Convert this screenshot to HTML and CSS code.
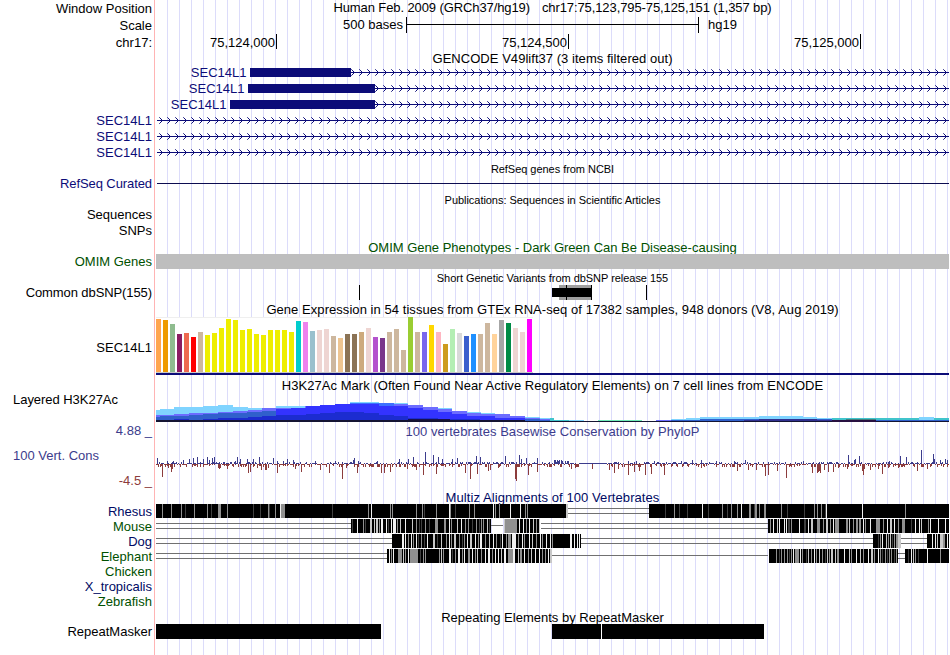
FILE: index.html
```html
<!DOCTYPE html>
<html lang="en">
<head>
<meta charset="utf-8">
<title>Genome Browser chr17:75,123,795-75,125,151</title>
<link rel="stylesheet" href="styles.css">
</head>
<body>
<svg class="defs" width="0" height="0" aria-hidden="true">
  <defs>
    <pattern id="arrows" x="0" y="0" width="8" height="16" patternUnits="userSpaceOnUse">
      <path d="M0 8.5H8" stroke="#0c0c78"/>
      <path d="M0.3 5.3L3.5 8.5L0.3 11.7" fill="none" stroke="#0c0c78"/>
    </pattern>
    <pattern id="arrows-intron" href="#arrows" x="2"/>
  </defs>
</svg>
<main class="browser">
  <div class="row h17"><div class="label">Window Position</div><div class="track title position"><span>Human Feb. 2009 (GRCh37/hg19)</span><span>chr17:75,123,795-75,125,151 (1,357 bp)</span></div></div>
  <div class="row h17"><div class="label">Scale</div><div class="track scale"><span class="bases">500 bases</span><span class="ruler"></span><span class="hg">hg19</span></div></div>
  <div class="row h17"><div class="label">chr17:</div><div class="track ticks"><span>75,124,000</span><span>75,124,500</span><span>75,125,000</span></div></div>
  <div class="row h13"><div class="track title t-gencode"><span>GENCODE V49lift37 (3 items filtered out)</span></div></div>

  <div class="row h16 navy gene-row"><div class="track gene g1"><span>SEC14L1</span><i></i><svg height="16"><rect width="100%" height="16" fill="url(#arrows)"/></svg></div></div>
  <div class="row h16 navy gene-row"><div class="track gene g2"><span>SEC14L1</span><i></i><svg height="16"><rect width="100%" height="16" fill="url(#arrows)"/></svg></div></div>
  <div class="row h16 navy gene-row"><div class="track gene g3"><span>SEC14L1</span><i></i><svg height="16"><rect width="100%" height="16" fill="url(#arrows)"/></svg></div></div>
  <div class="row h16 navy gene-row"><div class="label">SEC14L1</div><div class="track intron"><svg height="16"><rect width="100%" height="16" fill="url(#arrows-intron)"/></svg></div></div>
  <div class="row h16 navy gene-row"><div class="label">SEC14L1</div><div class="track intron"><svg height="16"><rect width="100%" height="16" fill="url(#arrows-intron)"/></svg></div></div>
  <div class="row h16 navy gene-row"><div class="label">SEC14L1</div><div class="track intron"><svg height="16"><rect width="100%" height="16" fill="url(#arrows-intron)"/></svg></div></div>

  <div class="row h16"><div class="track title small"><span>RefSeq genes from NCBI</span></div></div>
  <div class="row h15 navy"><div class="label tight">RefSeq Curated</div><div class="track refline"></div></div>
  <div class="row h16"><div class="track title small"><span>Publications: Sequences in Scientific Articles</span></div></div>
  <div class="row h16"><div class="label">Sequences</div></div>
  <div class="row h16"><div class="label">SNPs</div></div>
  <div class="row h15 green"><div class="track title t-omim"><span>OMIM Gene Phenotypes - Dark Green Can Be Disease-causing</span></div></div>
  <div class="row h15 green"><div class="label">OMIM Genes</div><div class="track omim"></div></div>
  <div class="row h16"><div class="track title small"><span>Short Genetic Variants from dbSNP release 155</span></div></div>
  <div class="row h15"><div class="label tight">Common dbSNP(155)</div><div class="track"><svg width="793" height="15" shape-rendering="crispEdges"><path d="M203.5 0V15M490.5 0V15" stroke="#000"/><path fill="#a0a0a0" d="M403 0h32v15h-32z"/><path d="M396 3h39v9h-39zM410 0h1v15h-1zM435 0h1v15h-1z"/></svg></div></div>
  <div class="row h17"><div class="track title t-gtex"><span>Gene Expression in 54 tissues from GTEx RNA-seq of 17382 samples, 948 donors (V8, Aug 2019)</span></div></div>
  <div class="row gtex-row"><div class="label">SEC14L1</div><div class="track gtex"><svg id="gtex" width="377" height="56" shape-rendering="crispEdges"></svg></div></div>
  <div class="row h20"><div class="track title t-h3k"><span>H3K27Ac Mark (Often Found Near Active Regulatory Elements) on 7 cell lines from ENCODE</span></div></div>
  <div class="row h27"><div class="label left">Layered H3K27Ac</div><div class="track"><svg id="h3k" width="793" height="27" shape-rendering="crispEdges"></svg></div></div>
  <div class="row h20 cons"><div class="label limit">4.88 _</div><div class="track title t-phylop"><span>100 vertebrates Basewise Conservation by PhyloP</span></div></div>
  <div class="row cons-row"><div class="cons-labels"><div class="cons">100 Vert. Cons</div><div class="neg">-4.5 _</div></div><div class="track"><svg id="phylop" width="793" height="48" shape-rendering="crispEdges"></svg></div></div>
  <div class="row h14 multiz"><div class="track title t-multiz"><span>Multiz Alignments of 100 Vertebrates</span></div></div>
  <div class="row h15 multiz"><div class="label">Rhesus</div><div class="track"><svg id="rhesus" width="793" height="14" shape-rendering="crispEdges"></svg></div></div>
  <div class="row h15 green"><div class="label">Mouse</div><div class="track"><svg id="mouse" width="793" height="14" shape-rendering="crispEdges"></svg></div></div>
  <div class="row h15 multiz"><div class="label">Dog</div><div class="track"><svg id="dog" width="793" height="14" shape-rendering="crispEdges"></svg></div></div>
  <div class="row h15 green"><div class="label">Elephant</div><div class="track"><svg id="elephant" width="793" height="14" shape-rendering="crispEdges"></svg></div></div>
  <div class="row h15 green"><div class="label">Chicken</div></div>
  <div class="row h15 multiz"><div class="label">X_tropicalis</div></div>
  <div class="row h15 green"><div class="label">Zebrafish</div></div>
  <div class="row h15"><div class="track title t-rmsk"><span>Repeating Elements by RepeatMasker</span></div></div>
  <div class="row h15"><div class="label">RepeatMasker</div><div class="track rmsk"><i></i><i></i><i></i></div></div>
</main>
<script src="tracks.js"></script>
</body>
</html>
```
FILE: styles.css
```css
* { box-sizing: border-box; }
body { margin: 0; background: #fff; color: #000; font: 13px "Liberation Sans", Arial, sans-serif; }
.defs { display: block; position: absolute; }
.browser {
  width: 950px; height: 655px; overflow: hidden; padding-right: 1px;
  background:
    linear-gradient(#ffb4b4, #ffb4b4) 154px 0 / 1px 100% no-repeat,
    repeating-linear-gradient(90deg, #dcdcfa 0 1px, transparent 1px 12px) 167px 0 / 782px 100% no-repeat;
}
.row { display: grid; grid-template: 100% / 152px 793px; column-gap: 4px; white-space: pre; }
.label { grid-column: 1; text-align: right; }
.tight { letter-spacing: -.09px; }
.track { grid-column: 2; min-width: 0; height: 100%; display: flex; }
.track svg { display: block; flex: none; }
.title { justify-content: center; }
.h13 { height: 13px; line-height: 15px; }
.h14 { height: 14px; line-height: 14px; }
.h15 { height: 15px; line-height: 15px; }
.h16 { height: 16px; line-height: 16px; }
.h17 { height: 17px; line-height: 17px; }
.h20 { height: 20px; line-height: 20px; }
.h27 { height: 27px; line-height: 9px; }
.gene-row { line-height: 17px; }
.navy { color: #0c0c78; }
.green { color: #005000; }
.cons { color: #3c3c8c; }
.neg { color: #8c3c3c; }
.multiz { color: #000a64; }
.small { font-size: 11px; padding-top: 1px; letter-spacing: -.04px; }
.position { line-height: 15px; gap: 12px; letter-spacing: -.1px; }
.t-gencode { letter-spacing: .04px; }
.t-omim, .t-rmsk { line-height: 17px; }
.t-gtex { line-height: 19px; letter-spacing: .055px; }
.t-h3k { line-height: 21px; letter-spacing: .045px; }
.t-phylop { letter-spacing: .04px; }
.t-multiz { line-height: 16px; letter-spacing: .08px; }

.scale { align-items: flex-start; line-height: 15px; }
.bases { width: 247px; text-align: right; }
.ruler { width: 293px; height: 16px; margin-left: 3px; border: solid #000; border-width: 0 1px; background: linear-gradient(#000, #000) 0 7px / 100% 1px no-repeat; }
.hg { margin-left: 9px; }
.ticks span { width: 292px; text-align: right; padding-right: 1px; border-right: 1px solid #000; height: 15px; line-height: 18px; }
.ticks span:first-child { width: 121px; }

.gene i { height: 9px; margin-top: 4px; background: #0c0c78; }
.gene span { text-align: right; padding-right: 3.5px; }
.gene svg { flex: 1; min-width: 0; }
.g1 span { width: 94px; }
.g1 i { width: 101px; }
.g2 span { width: 92px; }
.g2 i { width: 127px; }
.g3 span { width: 74px; }
.g3 i { width: 145px; }
.intron { padding-left: 1px; }
.intron svg { width: 792px; }
.refline { background: linear-gradient(#0c0c50, #0c0c50) 1px 7px / 792px 1px no-repeat; }
.omim { background: #bebebe; }

.gtex-row { height: 58px; line-height: 62px; }
.gtex { border-bottom: 2px solid #0c0c78; }
.left { text-align: left; padding-left: 13px; letter-spacing: -.04px; }
.limit { line-height: 18px; }
.cons-row { height: 48px; }
.cons-labels { display: flex; flex-direction: column; gap: 10px; padding-top: 6px; line-height: 15px; }
.cons-labels .cons { padding-left: 13px; }
.cons-labels .neg { text-align: right; }
.rmsk i { background: #000; width: 225px; }
.rmsk i:nth-child(2) { width: 49px; margin-left: 171px; }
.rmsk i:nth-child(3) { width: 162px; margin-left: 1px; }
```
FILE: tracks.js
```js
// All x values are window pixels; the data area starts at ORIGIN.
const ORIGIN = 156;

function rects(id, list) {
  document.getElementById(id).innerHTML = list
    .map(([x, y, w, h, fill]) => `<rect x="${x}" y="${y}" width="${w}" height="${h}" fill="${fill}"/>`)
    .join("");
}

// GTEx: one bar per tissue, [height, colour]
const Y = "#eeee00", T = "#cdb79e", P = "#eed5d2";
const gtex = [
  [53, "#ffa54f"], [52, "#ee9a00"], [48, "#8fbc8f"], [38, "#8b1c62"], [39, "#ee6a50"], [35, "#ff0000"], [40, T],
  [37, Y], [39, Y], [44, Y], [53, Y], [52, Y], [42, Y], [43, Y], [38, Y], [37, Y], [42, Y], [42, Y], [42, Y], [40, Y],
  [51, "#00cdcd"], [50, "#ee82ee"], [41, "#9ac0cd"], [42, P], [43, P], [36, T], [34, "#eec591"],
  [38, "#8b7355"], [38, "#8b7355"], [40, "#cdaa7d"], [44, P], [35, "#b452cd"], [34, "#7a378b"], [40, T], [43, T],
  [22, T], [55, "#9acd32"], [40, T], [40, "#7a67ee"], [47, "#ffd700"], [40, "#ffb6c1"], [28, "#cd9b1d"],
  [43, "#b4eeb4"], [39, "#d9d9d9"], [36, "#3a5fcd"], [38, "#1e90ff"], [38, T], [49, T], [38, "#ffd39b"],
  [52, "#a6a6a6"], [49, "#008b45"], [44, P], [40, P], [53, "#ff00ff"]
];
rects("gtex", [
  [0, 0, 377, 56, "#fff"], [0, 0, 377, 1, "#efefef"], [0, 55, 377, 1, "#c8c8c8"],
  ...gtex.map(([h, c], i) => [i * 7, 55 - h, 5, h, c])
]);

// H3K27Ac: stacked step areas, "x:top" up to the listed end, painted back to front
const BASE = 422, TOP = 395;
const layers = [
  ["#80d4ff", "156:410 160:409 174:407 203:406 218:405 233:407 248:408 276:406 320:405 335:404 350:402 379:403 408:405 423:407 438:408 452:411 467:412 481:413 495:414 510:416 525:417 540:418 554"],
  ["#6c6cff", "156:415 174:414 189:413 218:412 233:411 248:410 262:408 291:408 305:406 350:404 408:405 423:407 438:409 452:411 467:413 481:414 510:416 525:418 540:419 550"],
  ["#3060cc", "156:417 160:416 189:415 203:414 218:413 247:412 262:411 276"],
  ["#3333ff", "276:409 291:408 306:406 320:405 335:404 350:403 379:406 408:408 423:410 438:412 452:414 467:416 495:418 525:420 554"],
  ["#3c70ff", "350:403 379:403 394"],
  ["#3333ff", "350:404 379:406 394"],
  ["#1c2cd0", "156:420 174:419 189:420 203:419 218:418 248:417 262:416 276:415 306:414 320:413 335:412 364:413 379:415 394:416 408:418 438:419 480:420 554"],
  ["#3060cc", "525:419 540:420 554"],
  ["#40c4cc", "550:418 554:420 569"],
  ["#80d4ff", "569:420 584"],
  ["#70ecb8", "598:420 642"],
  ["#6c6cff", "656:420 671"],
  ["#80d4ff", "671:419 686:418 700:417 759:416 803:417 817:418 832"],
  ["#40c4cc", "832:418 949"],
  ["#80d4ff", "919:417 934:418 934"],
  ["#3060cc", "671:420 700:419 832:420 949"],
  ["#303090", "744:420 759:419 817:420 876"],
  ["#408080", "846:419 876"],
  ["#181050", "408:419 450:420 495:421 949"],
  ["#141432", "156:420 525:421 949"],
  ["#281040", "832:420 876"]
];
const steps = [];
for (const [fill, spec] of layers) {
  const pts = spec.split(" ").map(p => p.split(":").map(Number));
  for (let i = 0; i + 1 < pts.length; i++) {
    const [x, y] = pts[i];
    steps.push([x - ORIGIN, y - TOP, pts[i + 1][0] - x, BASE - y, fill]);
  }
}
rects("h3k", steps);

// PhyloP: signed peaks "x:height" over a low, mixed background
const up = "157:6 167:3 173:3 183:4 189:5 193:6 197:7 203:5 207:7 209:4 212:6 214:7 223:2 230:2 235:3 237:7 240:5 247:5 253:5 259:7 273:6 277:3 283:3 287:5 293:4 315:3 335:3 353:4 354:6 358:3 377:3 399:5 408:5 413:7 425:12 433:9 438:7 442:5 452:5 457:6 476:8 480:7 505:8 519:9 521:5 526:6 537:6 554:4 555:4 557:4 558:3 559:4 561:4 562:3 565:3 567:3 568:3 628:3 636:3 646:2 654:3 681:3 692:4 701:4 716:3 734:3 745:4 763:2 803:3 848:9 854:4 855:5 859:8 889:3 900:8 906:7 921:14 933:10 934:5 940:4 945:5 947:4";
const down = "160:3 162:13 168:4 171:8 172:5 174:3 200:3 209:2 218:4 219:5 220:4 224:2 227:5 232:2 243:3 248:9 250:8 254:2 257:4 261:6 265:6 266:6 268:4 277:9 283:2 293:3 295:5 301:8 320:6 329:9 342:15 346:4 357:9 381:9 384:9 390:8 407:5 416:6 423:11 436:10 465:9 470:15 477:10 488:7 490:6 498:4 515:15 516:17 528:11 537:8 549:3 571:5 575:4 592:5 609:6 614:9 618:5 628:11 634:8 639:7 645:11 651:10 664:11 701:4 737:7 748:6 756:6 765:12 768:11 777:7 786:14 812:9 817:9 818:8 819:7 820:9 824:6 828:8 833:8 838:4 847:5 862:7 863:11 864:5 870:6 878:5 882:10 888:4 898:4 917:7 927:5";
const peaks = s => new Map(s.split(" ").map(p => p.split(":").map(Number)));
const ups = peaks(up), downs = peaks(down);
const bars = [];
for (let x = 156; x < 949; x++) {
  const n = (x * 7919 + (x * x) % 97) % 11;
  const quiet = x > 578 && x < 606;
  const u = ups.get(x) || (quiet ? 1 : n < 2 ? 2 : n < 6 ? 1 : 0);
  const d = downs.get(x) || (quiet ? 0 : n > 8 ? 3 : n > 5 ? 1 : n === 4 ? 2 : 0);
  if (u) bars.push([x - ORIGIN, 22 - u, 1, u, "#3c3c8c"]);
  if (d) bars.push([x - ORIGIN, 22, 1, d, "#8c3c3c"]);
}
rects("phylop", bars);

// Alignment rows. blocks: black spans; lines: [from, to, 1|2 strokes];
// stripes: x, shade letter (d dark, g grey, l light, w white), optional width
const SHADE = { d: "#404040", g: "#909090", l: "#c8c8c8", w: "#f0f0f0" };
function align(id, blocks, lines, stripes) {
  const out = [];
  for (const [a, b, n] of lines)
    for (const y of n === 2 ? [4, 9] : [6]) out.push([a - ORIGIN, y, b - a, 1, "#707070"]);
  for (const [a, b] of blocks) out.push([a - ORIGIN, 0, b - a, 14, "#000"]);
  for (const s of stripes.split(" ")) {
    const [, x, c, w] = s.match(/^(\d+)([dglw])(\d*)$/);
    out.push([x - ORIGIN, 0, +w || 1, 14, SHADE[c]]);
  }
  rects(id, out);
}
align("rhesus", [[156, 566], [649, 949]], [[568, 649, 2]],
  "162g 171g 181g 185d 194g 207g 211d 218g3 227g 253d 260d 268g 269d 275g 280w 281g4 332d 368g 371w 390g 392g 416g 422g 424d 436g 449w 450g 455d 469g 474g 493w 495g 499g 510w 520w 525g 527g 566l2 665d 674g 679d 687d 702w 708d 722g 727d 731g 737g 741w 749g2 754d 755g2 759g 764g2 781g 787d 804d 814g 817g 821g 825d 826w 862w 905g");
align("mouse", [[351, 491], [504, 540], [768, 949]], [[156, 351, 2], [491, 503, 1], [541, 768, 2]],
  "352d 357w 363g 365d 370l2 374l 376l2 379g 381w2 386w 388d 391w 393w3 397g 400l 405w 412l 416g 419d 421d 425g 429d 435g3 444g2 449w 451g 457l 461w 465g 468g 472d 476g 479d 481g 483g 487l 489d 504l 505g12 519w 523w 526g 529w 533l 536g 539l 770g 773w 777l 779w 784w 786w 788d2 791g 799w 804d2 808w 811l2 817g3 823g 826l2 830g 833w 835g4 846g2 849l 853g 856g2 859g2 863w 865g 870w 876g4 883g 887w 890l2 894w 898g 902g3 911d 915w 919w 921l 928g 930w 938w 945w");
align("dog", [[392, 581], [873, 898], [927, 949]], [[156, 392, 2], [581, 873, 2], [901, 927, 2]],
  "402w2 405w 408g 411w 413g 416w 418d 421g 424d 427w 433l2 437d 441l 446g 449w 451g 454l2 459g 462d 464g 467w 470l2 475w 478g 480w2 485g 489l 493w 496g 500d 502w 506g 508g3 512w4 518g 522w 524g 529w 532l 536g 540w 542g 546w 550w 552g 570w2 574w 577w 579w 878d 880g 882w 886l 888g 890l 892d 894g 896g2 898l3 932w 935w 937l 940l3 943g2 947w");
align("elephant", [[387, 550], [769, 898], [905, 949]], [[156, 387, 2], [552, 768, 1], [898, 905, 2]],
  "389w 391g 393w 398g4 403l 405g 408w 410g3 413g4 417g 420d 423g 425g 439g 441l 443g 449w2 452d 455g 458w2 462g 464w 468g2 472w 475g 477l 481g 485w 488w2 492g 495w 498w 501l 504w2 508g5 513w2 518l 520g2 524w 528g 531l 535w 539w 542g 545g 548w 550l2 776g 779d 781g 784g 787g 789d 791g 793w 795g4 800w 802g 806d 808l 811g 814w 816g 819l 822g 825d 827l 829g 831l2 835l 837g2 844w 849l 851g 856w 860l 863g 868w 871l2 874g 878w 880g 882d 885g 887d 889g 891g 894d 896g 908d 911w 913l 915g 918d 927w 940g");
```
